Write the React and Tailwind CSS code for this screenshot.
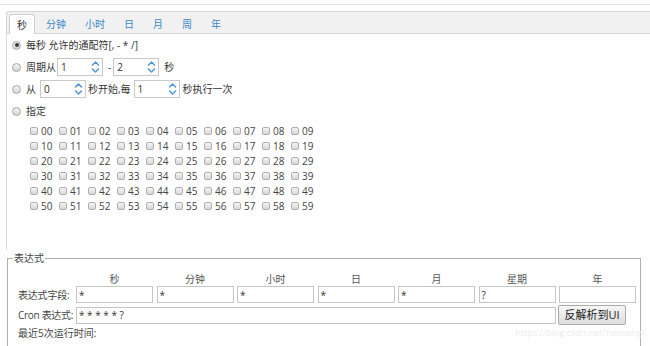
import React from "react";

const FONT = "font-['Open_Sans','Noto_Sans_CJK_SC',sans-serif]";

function Radio({ checked }) {
  return (
    <span className="flex h-[9px] w-[9px] shrink-0 items-center justify-center rounded-full border border-[#a6a6a6] bg-linear-to-b from-[#f4f4f4] to-[#d6d6d6]">
      {checked && <span className="h-[4px] w-[4px] rounded-full bg-[#3a3a3a]" />}
    </span>
  );
}

function Spinner({ value }) {
  return (
    <div className="flex h-[18px] w-[46px] shrink-0 items-center justify-between border border-[#c9c9c9] bg-white pl-[3px] pr-[2px]">
      <span>{value}</span>
      <svg width="9" height="14" viewBox="0 0 9 14" fill="none" stroke="#4f97d8" strokeWidth="1.5" strokeLinecap="round" strokeLinejoin="round">
        <path d="M1.5 5 L4.5 2 L7.5 5" />
        <path d="M1.5 9 L4.5 12 L7.5 9" />
      </svg>
    </div>
  );
}

const tabs = ["秒", "分钟", "小时", "日", "月", "周", "年"];
const cols = ["秒", "分钟", "小时", "日", "月", "星期", "年"];
const vals = ["*", "*", "*", "*", "*", "?", ""];

export default function App() {
  const rows = [0, 1, 2, 3, 4, 5];
  return (
    <div className={`relative h-[346px] w-[650px] overflow-hidden bg-white text-[10px] leading-[14px] text-[#333] ${FONT}`}>
      <div className="pt-[4px]">
        <div className="h-px w-full bg-[#e2e2e2]" />
      </div>
      <div className="ml-[6px] mt-[6px] w-[660px]">
        {/* tab bar */}
        <div className="flex h-[23px] items-end gap-[3px] rounded-tl-[3px] border-l border-t border-b border-[#d6d6d6] bg-[#f1f1f1] pl-[2px]">
          {tabs.map((t, i) =>
            i === 0 ? (
              <div key={t} className="-mb-px flex h-[20px] items-center rounded-t-[3px] border-l border-r border-t border-[#cfcfcf] bg-white px-[7px] text-[#333]">
                {t}
              </div>
            ) : (
              <div key={t} className="-mb-px flex h-[20px] items-center border border-transparent px-[7px] text-[#3a86c8]">
                {t}
              </div>
            )
          )}
        </div>
        {/* panel body */}
        <div className="h-[216px] border-l border-[#dcdcdc]">
          <div className="flex h-[22px] items-center pl-[5px]">
            <Radio checked />
            <span className="ml-[5px]">每秒 允许的通配符[, - * /]</span>
          </div>
          <div className="flex h-[22px] items-center pl-[5px]">
            <Radio />
            <span className="ml-[5px]">周期从</span>
            <span className="ml-[1px]"><Spinner value="1" /></span>
            <span className="ml-[5px]">-</span>
            <span className="ml-[2px]"><Spinner value="2" /></span>
            <span className="ml-[5px]">秒</span>
          </div>
          <div className="flex h-[22px] items-center pl-[5px]">
            <Radio />
            <span className="ml-[5px]">从</span>
            <span className="ml-[4px]"><Spinner value="0" /></span>
            <span className="ml-[2px]">秒开始,每</span>
            <span className="ml-[3px]"><Spinner value="1" /></span>
            <span className="ml-[3px]">秒执行一次</span>
          </div>
          <div className="flex h-[22px] items-center pl-[5px]">
            <Radio />
            <span className="ml-[5px]">指定</span>
          </div>
          <div className="pl-[23px] pt-px">
            {rows.map((r) => (
              <div key={r} className="flex h-[15px]">
                {Array.from({ length: 10 }, (_, c) => {
                  const n = String(r * 10 + c).padStart(2, "0");
                  return (
                    <div key={n} className="flex h-[15px] w-[29px] items-center">
                      <span className="h-[8px] w-[8px] shrink-0 rounded-[2px] border border-[#afafaf] bg-linear-to-b from-[#f4f4f4] to-[#d8d8d8]" />
                      <span className="ml-[3px] text-[#444]">{n}</span>
                    </div>
                  );
                })}
              </div>
            ))}
          </div>
        </div>
      </div>

      {/* expression fieldset */}
      <fieldset className="ml-[7px] mt-px h-[120px] w-[634px] border border-[#b0b0b0]">
        <legend className="ml-[5px] px-px leading-[14px] text-[#444]">表达式</legend>
        <div className="pl-[10px] pt-[7px]">
          <div className="grid h-[14px] grid-cols-[58px_repeat(7,80.5px)] items-center text-[#555]">
            <span />
            {cols.map((c) => (
              <span key={c} className="w-[77px] text-center">{c}</span>
            ))}
          </div>
          <div className="grid h-[17px] grid-cols-[58px_repeat(7,80.5px)] items-center">
            <span className="tracking-[-0.2px] text-[#444]">表达式字段:</span>
            {vals.map((v, i) => (
              <div key={i} className="flex h-[17px] w-[77px] items-center border border-[#c6c6c6] bg-white pl-[2px]">
                {v}
              </div>
            ))}
          </div>
          <div className="mt-[2px] flex h-[20px] items-center">
            <span className="w-[58px] tracking-[-0.3px] text-[#444]">Cron 表达式:</span>
            <div className="flex h-[17px] w-[480px] items-center border border-[#c6c6c6] bg-white pl-[2px]">
              * * * * * ?
            </div>
            <button className="ml-[2px] flex h-[20px] w-[68px] items-center justify-center rounded-[2px] border border-[#a9a9a9] bg-linear-to-b from-[#f6f6f6] to-[#dedede] text-[11px] text-[#222]">
              反解析到UI
            </button>
          </div>
          <div className="mt-px flex h-[14px] items-center justify-between text-[#444]">
            <span>最近5次运行时间:</span>
            <span className="mr-[-6px] text-[9px] text-[#ececec]">https://blog.csdn.net/neosengli</span>
          </div>
        </div>
      </fieldset>
    </div>
  );
}
